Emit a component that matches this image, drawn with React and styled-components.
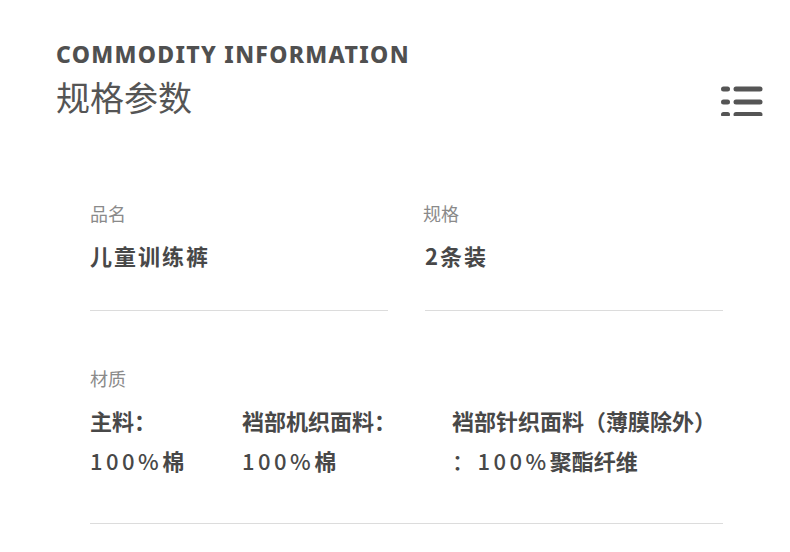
import React from "react";
import styled, { createGlobalStyle } from "styled-components";

const GlobalStyle = createGlobalStyle`
  body {
    margin: 0;
    background: #fff;
    font-family: "Noto Sans", "Noto Sans CJK SC", sans-serif;
  }
`;

const Page = styled.div`
  width: 790px;
  height: 552px;
  overflow: hidden;
  background: #fff;
  color: #4a4a4a;
`;

const Header = styled.header`
  display: flex;
  justify-content: space-between;
  align-items: flex-end;
  padding: 39px 27px 0 56px;
`;

const TitleBlock = styled.div`
  display: flex;
  flex-direction: column;
`;

const EnTitle = styled.div`
  font-family: "Noto Sans", sans-serif;
  font-weight: 800;
  font-size: 23px;
  line-height: 30px;
  letter-spacing: 1.3px;
  color: #505050;
`;

const CnTitle = styled.h1`
  margin: 6px 0 0;
  font-family: "Noto Sans CJK SC", sans-serif;
  font-weight: 400;
  font-size: 34px;
  line-height: 44px;
  color: #555;
`;

const MenuIcon = styled.svg`
  display: block;
  margin-bottom: 3px;
`;

const Body = styled.main`
  padding: 0 67px 0 90px;
`;

const Grid = styled.div`
  display: grid;
  grid-template-columns: 1fr 1fr;
  column-gap: 37px;
  margin-top: 82px;
`;

const Field = styled.section`
  padding-bottom: ${(p) => p.$pb || 39}px;
  border-bottom: 1px solid #dcdcdc;
  margin-top: ${(p) => p.$mt || 0}px;
`;

const Label = styled.div`
  font-family: "Noto Sans CJK SC", sans-serif;
  font-size: 18px;
  line-height: 25px;
  color: #8a8a8a;
  margin-left: ${(p) => p.$indent || 0}px;
`;

const Value = styled.div`
  margin-top: 14px;
  font-family: "Noto Sans CJK SC", sans-serif;
  font-weight: 700;
  font-size: 22px;
  line-height: 31px;
  letter-spacing: 2px;
  color: #484848;
`;

const MaterialRow = styled.div`
  display: flex;
  margin-top: 9px;
`;

const MaterialCol = styled.div`
  width: ${(p) => (p.$w ? `${p.$w}px` : "auto")};
  flex: ${(p) => (p.$w ? "none" : "1")};
  font-family: "Noto Sans CJK SC", sans-serif;
  font-weight: 700;
  font-size: 22px;
  line-height: 40px;
  color: #484848;
  white-space: nowrap;
`;

const Num = styled.span`
  font-weight: 500;
  letter-spacing: 3.5px;
`;

const materials = [
  { w: 152, name: "主料：", val: "100%", rest: "棉" },
  { w: 210, name: "裆部机织面料：", val: "100%", rest: "棉" },
  { w: 0, name: "裆部针织面料（薄膜除外）", val: "：100%", rest: "聚酯纤维" },
];

export default function App() {
  return (
    <>
      <GlobalStyle />
      <Page>
        <Header>
          <TitleBlock>
            <EnTitle>COMMODITY INFORMATION</EnTitle>
            <CnTitle>规格参数</CnTitle>
          </TitleBlock>
          <MenuIcon width="42" height="32" viewBox="0 0 42 32">
            <g fill="#555">
              <rect x="0" y="2.5" width="9" height="5" rx="2.5" />
              <rect x="12.5" y="2.5" width="29" height="5" rx="2.5" />
              <rect x="0" y="15.5" width="9" height="5" rx="2.5" />
              <rect x="12.5" y="15.5" width="29" height="5" rx="2.5" />
              <rect x="0" y="28" width="9" height="5" rx="2.5" />
              <rect x="12.5" y="28" width="29" height="5" rx="2.5" />
            </g>
          </MenuIcon>
        </Header>
        <Body>
          <Grid>
            <Field>
              <Label>品名</Label>
              <Value>儿童训练裤</Value>
            </Field>
            <Field>
              <Label $indent={-2}>规格</Label>
              <Value>2条装</Value>
            </Field>
          </Grid>
          <Field $mt={55} $pb={43}>
            <Label>材质</Label>
            <MaterialRow>
              {materials.map((m) => (
                <MaterialCol key={m.name} $w={m.w}>
                  <div>{m.name}</div>
                  <div>
                    <Num>{m.val}</Num>
                    {m.rest}
                  </div>
                </MaterialCol>
              ))}
            </MaterialRow>
          </Field>
        </Body>
      </Page>
    </>
  );
}
